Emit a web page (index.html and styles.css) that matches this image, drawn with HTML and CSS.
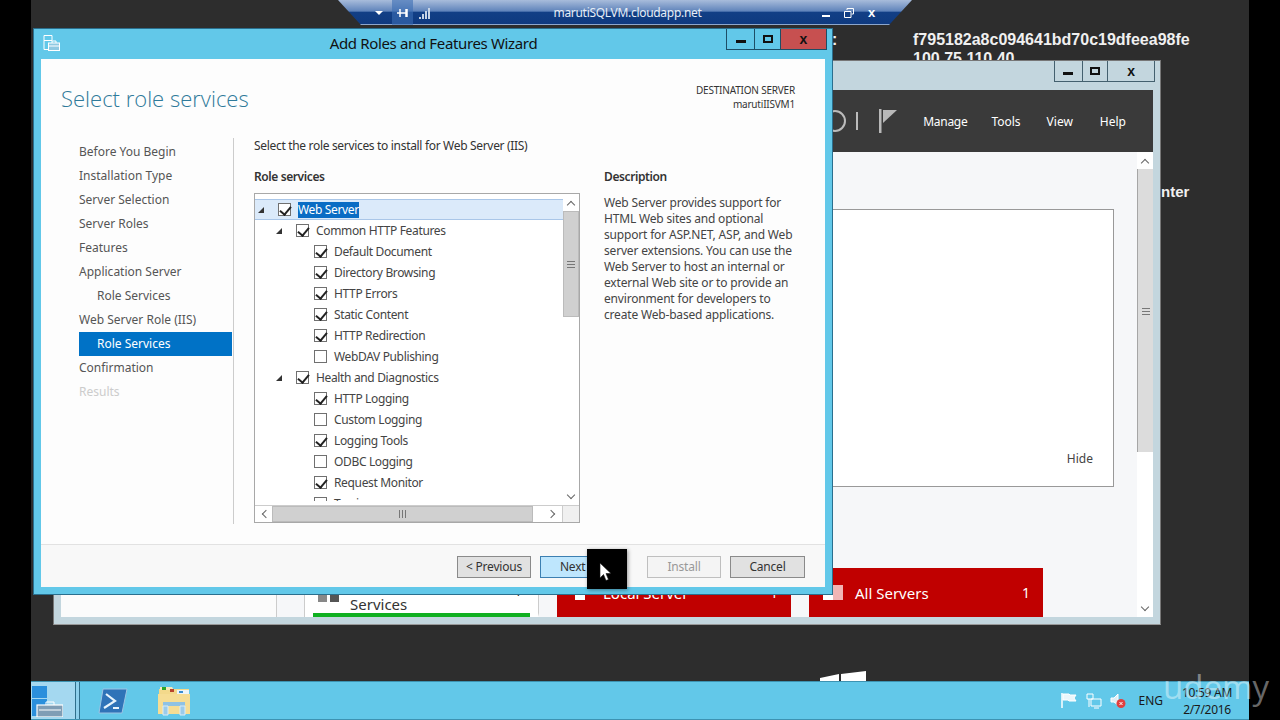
FILE: index.html
```html
<!DOCTYPE html>
<html lang="en">
<head>
  <meta charset="UTF-8">
  <title>Add Roles and Features Wizard</title>
  <link rel="stylesheet" href="styles.css">
</head>
<body>
  <div class="desktop">
    <div class="desk-info">f795182a8c094641bd70c19dfeea98fe<br>100.75.110.40</div>
    <div class="desk-colon">:</div>
    <div class="desk-nter">nter</div>
    <svg class="win-logo" width="46" height="10" viewBox="0 0 46 10"><polygon points="0,7 19,3 19,10 0,10" fill="#fff"/><polygon points="21,3 46,0 46,10 21,10" fill="#fff"/></svg>

    <!-- server manager behind the wizard -->
    <div class="back-win">
      <div class="back-title">
        <div class="ctrls back-ctrls">
          <span class="ctrl c-min"><i class="ic-min"></i></span>
          <span class="ctrl c-max"><i class="ic-max"></i></span>
          <span class="ctrl c-close">x</span>
        </div>
      </div>
      <div class="back-menu">
        <span class="refresh"></span>
        <span class="menu-sep"></span>
        <svg class="menu-flag" width="18" height="24" viewBox="0 0 18 24"><rect x="0" y="0" width="2.500" height="24" fill="#b9b9b9"/><polygon points="4,1 18,1 4,14" fill="#b9b9b9"/></svg>
        <span class="menu-item m-manage">Manage</span>
        <span class="menu-item m-tools">Tools</span>
        <span class="menu-item m-view">View</span>
        <span class="menu-item m-help">Help</span>
      </div>
      <div class="back-body">
        <div class="back-main">
          <div class="panel"><span class="hide-link">Hide</span></div>
          <div class="tiles">
            <div class="tile-blank"></div>
            <div class="tile-gap"></div>
            <div class="tile tile-white">
              <span class="svc-icon"></span>
              <span class="svc-num">1</span>
              <span class="svc-name">Services</span>
            </div>
            <div class="tile-gap2"></div>
            <div class="tile tile-red t-local">
              <span class="t-icon"></span><span class="t-name">Local Server</span><span class="t-num">1</span>
            </div>
            <div class="tile-gap2"></div>
            <div class="tile tile-red t-all">
              <span class="t-icon"></span><span class="t-name">All Servers</span><span class="t-num">1</span>
            </div>
          </div>
        </div>
        <div class="back-scroll">
          <span class="sb-btn"><i class="chev up"></i></span>
          <span class="back-thumb"><i class="grip"></i></span>
          <span class="back-track"></span>
          <span class="sb-btn"><i class="chev down"></i></span>
        </div>
      </div>
    </div>

    <!-- rdp connection bar -->
    <div class="rdp-bar">
      <span class="rdp-arrow"></span>
      <span class="rdp-pin">
        <svg width="12" height="10" viewBox="0 0 12 10"><path d="M0 5h9M3 1v8M9 1v8M10 1v8" stroke="#fff" stroke-width="1.500" fill="none"/></svg>
      </span>
      <svg class="rdp-signal" width="12" height="12" viewBox="0 0 12 12"><path d="M1 12V10M4 12V7M7 12V4M10 12V1" stroke="#c7d4e6" stroke-width="2" fill="none"/></svg>
      <span class="rdp-name">marutiSQLVM.cloudapp.net</span>
      <span class="rdp-btn"><i class="rdp-min"></i></span>
      <span class="rdp-btn"><svg width="10" height="10" viewBox="0 0 10 10"><path d="M3 2V0.500H9.500V6H7.500M0.500 3.500H7V9.500H0.500Z" stroke="#fff" fill="none"/></svg></span>
      <span class="rdp-btn rdp-x">x</span>
    </div>

    <!-- wizard -->
    <div class="wizard">
      <div class="wiz-title">
        <svg class="wiz-icon" width="17" height="16" viewBox="0 0 17 16"><path d="M1 .5h8v5H1zM1 5.500v9h5" fill="none" stroke="#fff"/><rect x="5.500" y="8" width="11" height="7.500" fill="#8fc9e2" stroke="#fff"/><path d="M9 8V6h4v2M6 11h10" stroke="#fff" fill="none"/></svg>
        <span class="wiz-name">Add Roles and Features Wizard</span>
        <div class="ctrls wiz-ctrls">
          <span class="ctrl c-min"><i class="ic-min"></i></span>
          <span class="ctrl c-max"><i class="ic-max"></i></span>
          <span class="ctrl c-close">x</span>
        </div>
      </div>
      <div class="wiz-body">
        <div class="wiz-head">
          <h1>Select role services</h1>
          <div class="dest">DESTINATION SERVER<br>marutiIISVM1</div>
        </div>
        <div class="wiz-main">
          <nav class="steps">
            <div class="step">Before You Begin</div>
            <div class="step">Installation Type</div>
            <div class="step">Server Selection</div>
            <div class="step">Server Roles</div>
            <div class="step">Features</div>
            <div class="step">Application Server</div>
            <div class="step sub">Role Services</div>
            <div class="step">Web Server Role (IIS)</div>
            <div class="step sub active">Role Services</div>
            <div class="step">Confirmation</div>
            <div class="step off">Results</div>
          </nav>
          <div class="content">
            <p class="intro">Select the role services to install for Web Server (IIS)</p>
            <div class="columns">
              <div class="col-tree">
                <h2>Role services</h2>
                <div class="tree-box">
                  <div class="tree-top">
                    <div class="tree">
                      <div class="row lv0 selected"><i class="tri"></i><i class="cb on"></i><span class="sel-text">Web Server</span></div>
                      <div class="row lv1"><i class="tri"></i><i class="cb on"></i><span>Common HTTP Features</span></div>
                      <div class="row lv2"><i class="cb on"></i><span>Default Document</span></div>
                      <div class="row lv2"><i class="cb on"></i><span>Directory Browsing</span></div>
                      <div class="row lv2"><i class="cb on"></i><span>HTTP Errors</span></div>
                      <div class="row lv2"><i class="cb on"></i><span>Static Content</span></div>
                      <div class="row lv2"><i class="cb on"></i><span>HTTP Redirection</span></div>
                      <div class="row lv2"><i class="cb"></i><span>WebDAV Publishing</span></div>
                      <div class="row lv1"><i class="tri"></i><i class="cb on"></i><span>Health and Diagnostics</span></div>
                      <div class="row lv2"><i class="cb on"></i><span>HTTP Logging</span></div>
                      <div class="row lv2"><i class="cb"></i><span>Custom Logging</span></div>
                      <div class="row lv2"><i class="cb on"></i><span>Logging Tools</span></div>
                      <div class="row lv2"><i class="cb"></i><span>ODBC Logging</span></div>
                      <div class="row lv2"><i class="cb on"></i><span>Request Monitor</span></div>
                      <div class="row lv2"><i class="cb"></i><span>Tracing</span></div>
                    </div>
                    <div class="vscroll">
                      <span class="sb-btn"><i class="chev up"></i></span>
                      <span class="v-thumb"><i class="grip"></i></span>
                      <span class="v-track"></span>
                      <span class="sb-btn"><i class="chev down"></i></span>
                    </div>
                  </div>
                  <div class="hscroll">
                    <span class="sb-btn h"><i class="chev left"></i></span>
                    <span class="h-thumb"><i class="grip vert"></i></span>
                    <span class="sb-btn h wide"><i class="chev right"></i></span>
                    <span class="corner"></span>
                  </div>
                </div>
              </div>
              <div class="col-desc">
                <h2>Description</h2>
                <p>Web Server provides support for<br>HTML Web sites and optional<br>support for ASP.NET, ASP, and Web<br>server extensions. You can use the<br>Web Server to host an internal or<br>external Web site or to provide an<br>environment for developers to<br>create Web-based applications.</p>
              </div>
            </div>
          </div>
        </div>
        <div class="wiz-foot">
          <button class="btn b-prev">&lt; Previous</button>
          <button class="btn b-next">Next &gt;</button>
          <button class="btn b-install" disabled>Install</button>
          <button class="btn b-cancel">Cancel</button>
        </div>
      </div>
    </div>

    <!-- taskbar -->
    <div class="taskbar">
      <div class="start">
        <svg width="32" height="32" viewBox="0 0 32 32"><path d="M1 1h15v12H1z" fill="#2a8fdc"/><path d="M1 14h15v17H1z" fill="#2a8fdc"/><rect x="6" y="20" width="26" height="12" fill="#7f9db5" stroke="#fff" stroke-width="1.200"/><path d="M15 20v-3h8v3" fill="none" stroke="#fff"/><path d="M8 25h22" stroke="#fff"/></svg>
      </div>
      <span class="start-sep"></span>
      <span class="task-icon ti-ps">
        <svg width="30" height="26" viewBox="0 0 30 26"><path d="M5 1H29L24 25H1Z" fill="#2f73b8" stroke="#9cc4e4"/><path d="M8 6l9 7-11 7" fill="none" stroke="#e8f4fc" stroke-width="2.200"/><path d="M15 20h6" stroke="#e8f4fc" stroke-width="2"/></svg>
      </span>
      <span class="task-icon ti-ex">
        <svg width="34" height="30" viewBox="0 0 34 30"><path d="M2 3h30v25H2z" fill="#f3d98b"/><path d="M3 1h12l2 3H3z" fill="#f7e9bc"/><path d="M5 1h4v3H5z" fill="#2aa52a"/><path d="M13 3h4v3h-4z" fill="#b8432c"/><path d="M20 4h12v4H20z" fill="#eef4f8"/><path d="M22 5h4v2h-4z" fill="#3a8ed0"/><path d="M1 8h32v20H1z" fill="#f6dd94"/><path d="M6 16h22v4H6z" fill="#8fc2e4"/><path d="M6 20h5v9H6zM23 20h5v9h-5z" fill="#9bcbea" stroke="#d8ecf8"/></svg>
      </span>
      <div class="tray">
        <svg class="tray-flag" width="16" height="15" viewBox="0 0 16 15"><path d="M1 0v15" stroke="#fff" stroke-width="1.500"/><path d="M2 1h6l1 1h6l-2 3 2 3H8L7 7H2z" fill="#eaf6fb" stroke="#fff"/></svg>
        <svg class="tray-net" width="16" height="16" viewBox="0 0 16 16"><path d="M1 1h6v5H1zM5 6h10v7H5zM3 6v8M8 15h5" fill="none" stroke="#fff"/></svg>
        <svg class="tray-vol" width="16" height="15" viewBox="0 0 16 15"><path d="M1 5h3l4-4v11L4 9H1z" fill="#dfeef6" stroke="#fff"/><circle cx="11" cy="10.500" r="4.500" fill="#e04040"/><path d="M9.500 9l3 3M12.500 9l-3 3" stroke="#fff"/></svg>
        <span class="lang">ENG</span>
        <span class="clock">10:59 AM<br>2/7/2016</span>
      </div>
    </div>

    <div class="cursor-box">
      <svg width="12" height="20" viewBox="0 0 12 20"><path d="M1 1v15l3.500-3.500 2.500 6 2.500-1-2.500-6h5z" fill="#fff" stroke="#111" stroke-width=".6"/></svg>
    </div>
    <div class="watermark">udemy</div>
  </div>
</body>
</html>
```

FILE: styles.css
```css
* {
  box-sizing: border-box;
}
html, body {
  margin: 0;
  height: 720px;
  overflow: hidden;
  background: black;
}
body {
  font-family: "Noto Sans", "Open Sans", sans-serif;
  font-size: 12px;
  color: #444;
}
i {
  display: block;
}
.desktop {
  position: relative;
  width: 1218px;
  height: 720px;
  margin-left: 31px;
  background: #2d2d2d;
}
.desk-info {
  position: absolute;
  left: 882px;
  top: 30px;
  font: bold 16px/19px "Liberation Sans", sans-serif;
  color: #f0f0f0;
}
.desk-colon {
  position: absolute;
  left: 801px;
  top: 30px;
  font: bold 16px/19px "Liberation Sans", sans-serif;
  color: #f0f0f0;
}
.desk-nter {
  position: absolute;
  left: 1130px;
  top: 182px;
  font: bold 15px/19px "Liberation Sans", sans-serif;
  color: #f0f0f0;
}
.win-logo {
  position: absolute;
  left: 789px;
  top: 671px;
}

/* back window */
.back-win {
  position: absolute;
  left: 22px;
  top: 60px;
  width: 1108px;
  height: 565px;
  padding: 0 7px 7px;
  display: flex;
  flex-direction: column;
  background: #c3d6de;
  border: 1px solid #777;
  border-bottom-color: #999;
}
.back-title {
  height: 29px;
  display: flex;
  justify-content: flex-end;
  flex: none;
}
.ctrls {
  display: flex;
  height: 21px;
  border: 1px solid #44606e;
  border-top: 0;
}
.ctrl {
  display: flex;
  align-items: center;
  justify-content: center;
  font: bold 14px/1 "Liberation Sans", sans-serif;
  color: #111;
}
.c-min, .c-max {
  border-right: 1px solid #44606e;
}
.ic-min {
  width: 10px;
  height: 3px;
  margin-top: 5px;
  background: #111;
}
.ic-max {
  width: 10px;
  height: 8px;
  border: 2px solid #111;
}
.back-ctrls {
  margin-right: -2px;
  width: 101px;
}
.back-ctrls .c-min {
  width: 28px;
}
.back-ctrls .c-max {
  width: 26px;
}
.back-ctrls .c-close {
  width: 46px;
}
.back-menu {
  position: relative;
  height: 62px;
  flex: none;
  display: flex;
  align-items: center;
  justify-content: flex-end;
  background: #3a3a3a;
  color: #fff;
}
.refresh {
  width: 22px;
  height: 22px;
  margin-right: 10px;
  border: 2px solid #bbb;
  border-radius: 50%;
}
.menu-sep {
  width: 2px;
  height: 18px;
  margin-right: 21px;
  background: #bbb;
}
.menu-flag {
  margin-right: 26px;
}
.menu-item {
  font-size: 12px;
}
.m-manage {
  margin-right: 24px;
  letter-spacing: -0.3px;
}
.m-tools {
  margin-right: 26px;
}
.m-view {
  margin-right: 27px;
}
.m-help {
  margin-right: 27px;
}
.back-body {
  flex: 1;
  display: flex;
  background: #f6f7f9;
  min-height: 0;
}
.back-main {
  flex: 1;
  display: flex;
  flex-direction: column;
}
.panel {
  height: 278px;
  margin: 57px 23px 0 0;
  display: flex;
  align-items: flex-end;
  justify-content: flex-end;
  padding: 0 20px 19px 0;
  background: white;
  border: 1px solid #999;
}
.hide-link {
  color: #444;
}
.tiles {
  display: flex;
  height: 49px;
  margin-top: 81px;
}
.tile-blank {
  width: 216px;
  background: #fbfbfb;
  border-right: 1px solid #ccc;
}
.tile-gap {
  width: 28px;
  border-right: 1px solid #ccc;
}
.tile-gap2 {
  width: 18px;
}
.tile {
  width: 234px;
  display: flex;
  align-items: center;
  font-size: 15px;
}
.tile-white {
  position: relative;
  background: white;
  border-right: 1px solid #ccc;
  border-bottom: 4px solid transparent;
  color: #333;
}
.tile-white::after {
  content: "";
  position: absolute;
  left: 8px;
  right: 8px;
  bottom: -4px;
  height: 4px;
  background: #10b020;
}
.svc-name {
  position: absolute;
  left: 45px;
  top: 26px;
}
.svc-num {
  position: absolute;
  right: 16px;
  top: 13px;
  font-size: 14px;
}
.svc-icon {
  position: absolute;
  left: 13px;
  top: 26px;
  width: 21px;
  height: 8px;
  background: linear-gradient(90deg, #888 45%, transparent 45% 55%, #555 55%);
}
.tile-red {
  padding: 0 13px 0 14px;
  background: #c00000;
  color: white;
}
.t-name {
  flex: 1;
  margin-left: 12px;
}
.t-num {
  font-size: 14px;
}
.t-icon {
  width: 20px;
  height: 15px;
  background: linear-gradient(90deg, #fff 50%, #f2b5b5 50%);
}
.t-local {
  padding-left: 18px;
}
.t-local .t-icon {
  width: 10px;
  background: white;
}
.t-local .t-name {
  margin-left: 18px;
}
.back-scroll {
  width: 16px;
  flex: none;
  display: flex;
  flex-direction: column;
  background: white;
}
.sb-btn {
  height: 17px;
  flex: none;
  display: flex;
  align-items: center;
  justify-content: center;
  background: white;
}
.back-thumb {
  height: 283px;
  flex: none;
  display: flex;
  align-items: flex-end;
  justify-content: center;
  padding-bottom: 137px;
  background: #dcdcdc;
  border-left: 1px solid #a6a6a6;
}
.back-track {
  flex: 1;
}
.chev {
  width: 6px;
  height: 6px;
  border-top: 1px solid #666;
  border-left: 1px solid #666;
}
.chev.up {
  transform: translateY(2px) rotate(45deg);
}
.chev.down {
  transform: translateY(-2px) rotate(225deg);
}
.chev.left {
  transform: translateX(2px) rotate(-45deg);
}
.chev.right {
  transform: translateX(-2px) rotate(135deg);
}
.grip {
  width: 8px;
  height: 7px;
  background: repeating-linear-gradient(#777 0 1px, transparent 1px 3px);
}
.grip.vert {
  width: 7px;
  height: 8px;
  background: repeating-linear-gradient(90deg, #777 0 1px, transparent 1px 3px);
}

/* rdp bar */
.rdp-bar {
  position: absolute;
  left: 307px;
  top: 0;
  width: 574px;
  height: 25px;
  display: flex;
  align-items: center;
  padding: 0 29px 0 37px;
  clip-path: polygon(0 0, 100% 0, 96% 100%, 4% 100%);
  background: linear-gradient(#a8bcdb, #5f83ba 45%, #123f86 48%, #0f3a80 95%, #8ca6cc 96%);
  color: #e6edf6;
}
.rdp-arrow {
  width: 0;
  height: 0;
  border: 4px solid transparent;
  border-top: 4px solid #fff;
  margin-top: 4px;
}
.rdp-pin {
  width: 21px;
  height: 25px;
  margin-left: 9px;
  display: flex;
  align-items: center;
  justify-content: center;
  background: rgba(60, 110, 180, 0.6);
}
.rdp-signal {
  margin-left: 6px;
}
.rdp-name {
  flex: 1;
  text-align: center;
  padding-left: 10px;
  font-size: 12px;
  letter-spacing: -0.3px;
}
.rdp-btn {
  width: 23px;
  display: flex;
  align-items: center;
  justify-content: center;
}
.rdp-min {
  width: 8px;
  height: 2px;
  margin-top: 7px;
  background: #fff;
}
.rdp-x {
  font: bold 13px/1 "Liberation Sans", sans-serif;
  color: #fff;
}

/* wizard */
.wizard {
  position: absolute;
  left: 3px;
  top: 29px;
  width: 798px;
  height: 565px;
  display: flex;
  flex-direction: column;
  padding: 0 7px 7px;
  background: #62c8e9;
  box-shadow: 0 0 0 1px #2a6f8e;
  z-index: 2;
}
.wiz-title {
  position: relative;
  height: 30px;
  flex: none;
  display: flex;
  align-items: center;
  justify-content: center;
  padding-bottom: 2px;
  color: #111;
}
.wiz-icon {
  position: absolute;
  left: 2px;
  top: 6px;
}
.wiz-name {
  font-size: 15px;
  margin-left: 1px;
  letter-spacing: -0.35px;
}
.wiz-ctrls {
  position: absolute;
  right: -2px;
  top: 0;
  width: 101px;
  border-color: #1d4e66;
}
.wiz-ctrls .c-min, .wiz-ctrls .c-max {
  border-right-color: #1d4e66;
}
.wiz-ctrls .c-min {
  width: 29px;
}
.wiz-ctrls .c-max {
  width: 26px;
}
.wiz-ctrls .c-close {
  width: 46px;
  background: #c75050;
}
.wiz-body {
  flex: 1;
  min-height: 0;
  display: flex;
  flex-direction: column;
  background: #fdfdfd;
}
.wiz-head {
  height: 79px;
  flex: none;
  display: flex;
  justify-content: space-between;
  padding: 0 30px 0 20px;
}
.wiz-head h1 {
  margin: 22px 0 0;
  font-size: 22px;
  line-height: 34px;
  font-weight: 300;
  color: #2f7a9a;
  font-family: "Open Sans", sans-serif;
}
.dest {
  margin-top: 24px;
  text-align: right;
  font-size: 10px;
  line-height: 14px;
  letter-spacing: -0.2px;
  color: #333;
}
.wiz-main {
  flex: 1;
  min-height: 0;
  display: flex;
}
.steps {
  width: 193px;
  height: 386px;
  flex: none;
  padding-left: 38px;
  padding-top: 2px;
  border-right: 1px solid #ccc;
}
.step {
  height: 24px;
  padding-left: 0;
  line-height: 24px;
  margin-right: 1px;
  color: #555;
}
.step.sub {
  padding-left: 18px;
}
.step.active {
  background: #0072c6;
  color: white;
}
.step.off {
  color: #ccc;
}
.content {
  flex: 1;
  padding-left: 20px;
}
.intro {
  margin: 0;
  height: 16px;
  line-height: 16px;
  letter-spacing: -0.32px;
  color: #333;
}
.columns {
  display: flex;
  margin-top: 15px;
}
.col-tree {
  width: 326px;
  flex: none;
}
h2 {
  margin: 0;
  height: 16px;
  font-size: 12px;
  line-height: 16px;
  font-weight: 600;
  letter-spacing: -0.4px;
  color: #333;
}
.tree-box {
  height: 330px;
  margin-top: 8px;
  border: 1px solid #a8a8a8;
  background: white;
  display: flex;
  flex-direction: column;
}
.tree-top {
  flex: 1;
  display: flex;
  min-height: 0;
}
.tree {
  flex: 1;
  height: 307px;
  padding-top: 5px;
  overflow: hidden;
  letter-spacing: -0.35px;
}
.row {
  height: 21px;
  flex: none;
  display: flex;
  align-items: center;
  color: #444;
}
.row.selected {
  height: 21px;
  background: #dbeafa;
  border: 1px solid #a9c6e8;
  border-width: 1px 0;
}
.lv0 {
  padding-left: 3px;
}
.lv1 {
  padding-left: 21px;
}
.lv2 {
  padding-left: 59px;
}
.tri {
  width: 0;
  height: 0;
  margin-right: 14px;
  border-left: 6px solid transparent;
  border-bottom: 6px solid #333;
}
.cb {
  position: relative;
  width: 13px;
  height: 13px;
  flex: none;
  margin-right: 7px;
  background: white;
  border: 1px solid #707070;
}
.cb.on::after {
  content: "";
  position: absolute;
  left: 3px;
  top: 0;
  width: 5px;
  height: 9px;
  border-right: 2px solid #222;
  border-bottom: 2px solid #222;
  transform: rotate(40deg);
}
.sel-text {
  background: #0a6cc4;
  color: white;
  line-height: 16px;
}
.vscroll {
  width: 16px;
  flex: none;
  display: flex;
  flex-direction: column;
}
.v-thumb {
  height: 106px;
  flex: none;
  display: flex;
  justify-content: center;
  align-items: center;
  background: #d0d0d0;
  border: 1px solid #bbb;
}
.v-track {
  flex: 1;
}
.hscroll {
  height: 17px;
  flex: none;
  display: flex;
  border-top: 1px solid #ccc;
}
.sb-btn.h {
  width: 17px;
  height: auto;
}
.sb-btn.wide {
  width: 29px;
  justify-content: flex-end;
  padding-right: 6px;
}
.h-thumb {
  width: 261px;
  display: flex;
  align-items: center;
  justify-content: center;
  background: #d0d0d0;
  border: 1px solid #bbb;
}
.corner {
  flex: 1;
  background: #f0f0f0;
  border-left: 1px solid #ccc;
}
.col-desc {
  padding-left: 24px;
}
.col-desc p {
  margin: 10px 0 0;
  line-height: 16px;
  letter-spacing: -0.18px;
  color: #444;
}
.wiz-foot {
  height: 43px;
  flex: none;
  display: flex;
  align-items: center;
  justify-content: flex-start;
  padding-left: 416px;
  padding-top: 1px;
  border-top: 1px solid #e2e2e2;
  background: #f8f8f8;
}
.btn {
  height: 22px;
  padding: 0;
  font: inherit;
  letter-spacing: -0.2px;
  color: #333;
  background: #e1e1e1;
  border: 1px solid #8a8a8a;
}
.b-prev {
  width: 74px;
}
.b-next {
  width: 75px;
  margin-left: 9px;
  background: #bee6fd;
  border-color: #3c7fb1;
}
.b-install {
  width: 74px;
  margin-left: 32px;
  color: #999;
  background: #f4f4f4;
  border-color: #bfbfbf;
}
.b-cancel {
  width: 75px;
  margin-left: 9px;
}

/* taskbar */
.taskbar {
  position: absolute;
  left: 0;
  top: 681px;
  width: 1218px;
  height: 39px;
  display: flex;
  align-items: center;
  background: #62c8e9;
  border-top: 1px solid #3d93b2;
  border-bottom: 1px solid #3d93b2;
}
.start {
  width: 44px;
  height: 37px;
  display: flex;
  align-items: center;
  background: #a4d8f0;
}
.start-sep {
  width: 5px;
  height: 37px;
  background: #8ed0ec;
  border-left: 1px solid #2f6f8c;
  border-right: 1px solid #2f6f8c;
}
.task-icon {
  display: flex;
}
.ti-ps {
  margin-left: 18px;
}
.ti-ex {
  margin-left: 29px;
}
.tray {
  margin-left: auto;
  display: flex;
  align-items: center;
  color: #1a1a1a;
}
.tray-flag {
  margin-right: 9px;
}
.tray-net {
  margin-right: 8px;
}
.tray-vol {
  margin-right: 12px;
}
.lang {
  margin-right: 18px;
}
.clock {
  width: 52px;
  margin-right: 16px;
  text-align: center;
  line-height: 17px;
  letter-spacing: -0.3px;
  white-space: nowrap;
}

.cursor-box {
  position: absolute;
  left: 556px;
  top: 549px;
  width: 40px;
  height: 40px;
  padding: 13px 0 0 12px;
  background: black;
  box-shadow: 1px 1px 4px rgba(0, 0, 0, 0.4);
  z-index: 3;
}
.watermark {
  position: absolute;
  left: 1132px;
  top: 664px;
  font-family: "Open Sans", sans-serif;
  font-size: 33px;
  line-height: 46px;
  color: rgba(255, 255, 255, 0.42);
  z-index: 4;
}
```
